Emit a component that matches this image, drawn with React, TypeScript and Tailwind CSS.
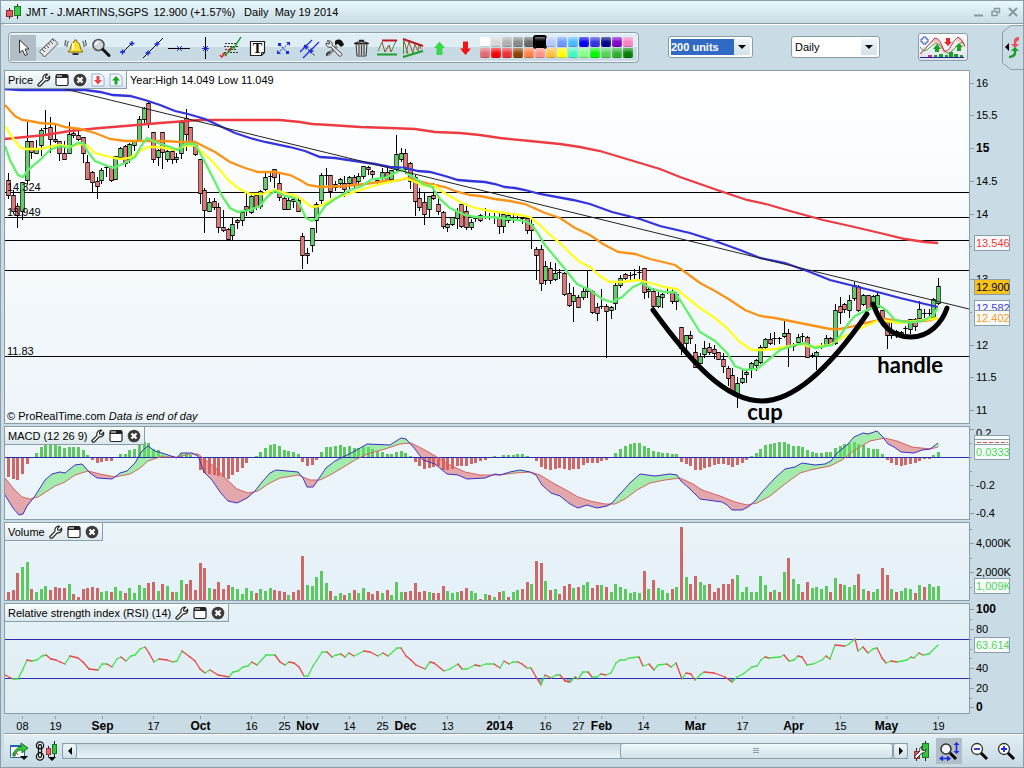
import * as React from "react";

const UP = "#5ed065";
const DOWN = "#e47575";
const FRAME = "#8b9ea8";

// centre of the n-th bar
const barX = (n: number) => Math.floor(8.5 + 4.673 * n);

// high, body top, body bottom, low, direction
type Candle = [number, number, number, number, number];

const candles: Candle[] = [
  [173, 180, 195, 198, 0], [190, 195, 211, 213, 0], [203, 206, 215, 227, 0], [182, 182, 211, 219, 1],
  [122, 141, 180, 183, 1], [141, 141, 152, 158, 0], [140, 149, 153, 153, 1], [128, 130, 145, 155, 1],
  [110, 128, 129, 133, 1], [117, 127, 139, 152, 0], [125, 139, 141, 142, 0], [141, 141, 153, 160, 0],
  [141, 153, 159, 159, 0], [122, 134, 153, 153, 1], [128, 133, 135, 137, 0], [129, 135, 139, 140, 0],
  [137, 137, 153, 162, 0], [155, 162, 179, 179, 0], [171, 172, 182, 191, 0], [177, 181, 186, 198, 0],
  [168, 170, 180, 183, 1], [165, 167, 168, 176, 1], [166, 167, 180, 181, 0], [156, 156, 179, 179, 1],
  [147, 148, 157, 158, 1], [145, 146, 163, 166, 0], [143, 144, 159, 162, 1], [140, 141, 145, 150, 1],
  [116, 119, 141, 141, 1], [107, 108, 119, 124, 1], [102, 103, 124, 127, 0], [132, 132, 159, 162, 0],
  [149, 150, 157, 165, 1], [132, 132, 152, 168, 0], [150, 151, 159, 161, 1], [147, 151, 159, 163, 0],
  [153, 157, 159, 162, 1], [120, 122, 153, 158, 1], [109, 118, 134, 150, 0], [127, 127, 143, 145, 0],
  [143, 145, 154, 155, 0], [159, 159, 193, 203, 0], [188, 190, 210, 232, 0], [198, 202, 211, 211, 1],
  [198, 201, 207, 209, 0], [203, 207, 227, 232, 0], [210, 227, 230, 231, 0], [228, 229, 239, 240, 0],
  [217, 224, 235, 240, 1], [219, 220, 222, 228, 0], [210, 212, 220, 225, 1], [193, 206, 209, 215, 0],
  [195, 196, 212, 213, 1], [193, 195, 207, 209, 0], [190, 191, 206, 208, 1], [173, 177, 189, 190, 1],
  [172, 176, 177, 181, 1], [169, 169, 177, 187, 0], [173, 183, 197, 200, 0], [197, 198, 209, 209, 0],
  [197, 200, 209, 209, 1], [198, 199, 201, 207, 1], [197, 200, 211, 211, 0], [233, 236, 255, 268, 0],
  [248, 253, 255, 263, 0], [228, 228, 245, 251, 1], [202, 204, 220, 232, 1], [173, 175, 200, 203, 1],
  [168, 175, 176, 184, 1], [175, 175, 191, 197, 0], [181, 184, 187, 190, 0], [178, 179, 183, 187, 1],
  [176, 183, 189, 196, 0], [176, 177, 183, 188, 1], [175, 177, 185, 187, 0], [173, 176, 181, 183, 1],
  [166, 166, 176, 178, 1], [166, 167, 169, 174, 0], [170, 171, 174, 177, 0], [178, 180, 182, 185, 1],
  [168, 172, 177, 179, 1], [168, 172, 180, 182, 0], [170, 170, 179, 182, 1], [135, 154, 169, 170, 1],
  [148, 153, 159, 161, 1], [149, 153, 169, 173, 0], [162, 163, 181, 188, 0], [175, 177, 201, 215, 0],
  [188, 198, 207, 210, 0], [193, 202, 214, 224, 0], [196, 196, 209, 217, 1], [183, 195, 198, 199, 0],
  [198, 204, 211, 214, 0], [211, 212, 226, 228, 0], [223, 224, 227, 231, 1], [217, 217, 224, 225, 1],
  [208, 211, 218, 228, 1], [204, 204, 226, 227, 0], [206, 211, 227, 229, 0], [219, 222, 227, 229, 1],
  [216, 218, 219, 221, 1], [214, 215, 220, 221, 0], [208, 217, 217, 218, 1], [213, 217, 217, 219, 1],
  [213, 217, 218, 223, 0], [211, 217, 226, 233, 0], [212, 214, 226, 232, 1], [214, 215, 220, 222, 1],
  [215, 217, 218, 222, 1], [214, 217, 218, 219, 1], [217, 218, 219, 223, 1], [218, 218, 230, 233, 0],
  [217, 224, 230, 248, 0], [247, 249, 255, 279, 0], [245, 249, 283, 290, 0], [261, 266, 280, 284, 1],
  [262, 268, 280, 283, 0], [263, 273, 279, 280, 1], [269, 272, 273, 278, 1], [272, 273, 294, 295, 0],
  [283, 293, 305, 306, 0], [287, 295, 301, 321, 1], [295, 297, 307, 307, 0], [287, 291, 297, 299, 1],
  [271, 289, 291, 297, 1], [290, 291, 312, 313, 0], [303, 307, 313, 320, 0], [289, 306, 307, 308, 1],
  [304, 306, 311, 357, 0], [306, 307, 310, 318, 1], [282, 285, 303, 309, 1], [275, 278, 285, 287, 1],
  [273, 274, 278, 279, 0], [272, 275, 276, 279, 1], [269, 274, 275, 278, 1], [266, 272, 273, 280, 1],
  [268, 268, 292, 298, 0], [287, 289, 291, 297, 1], [288, 291, 306, 307, 0], [292, 296, 306, 307, 1],
  [293, 294, 297, 307, 1], [288, 292, 292, 293, 1], [289, 291, 301, 303, 0], [292, 294, 301, 309, 1],
  [327, 327, 348, 354, 0], [335, 335, 343, 353, 1], [331, 335, 338, 343, 0], [344, 352, 367, 367, 0],
  [353, 356, 363, 363, 1], [341, 348, 354, 357, 1], [343, 347, 352, 354, 0], [345, 349, 353, 358, 0],
  [352, 352, 359, 359, 0], [353, 359, 366, 372, 0], [366, 368, 378, 385, 0], [368, 375, 392, 393, 0],
  [377, 383, 393, 407, 1], [368, 378, 382, 383, 1], [371, 372, 374, 382, 1], [362, 363, 368, 377, 1],
  [359, 360, 365, 370, 1], [345, 347, 362, 363, 1], [338, 339, 347, 349, 1], [333, 339, 343, 344, 0],
  [332, 338, 339, 344, 1], [337, 338, 339, 343, 1], [319, 333, 336, 337, 1], [329, 333, 347, 366, 0],
  [343, 346, 347, 350, 1], [334, 337, 342, 343, 1], [333, 336, 337, 341, 1], [336, 337, 357, 357, 0],
  [353, 355, 356, 357, 0], [351, 352, 356, 369, 1], [343, 346, 347, 348, 1], [335, 338, 344, 345, 1],
  [337, 338, 344, 345, 0], [304, 310, 343, 344, 1], [297, 306, 312, 323, 0], [303, 304, 309, 312, 0],
  [295, 300, 310, 317, 1], [282, 285, 298, 300, 1], [285, 286, 310, 311, 0], [294, 295, 304, 305, 1],
  [295, 295, 309, 310, 0], [295, 296, 304, 308, 1], [293, 295, 307, 309, 1], [310, 310, 321, 323, 0],
  [320, 321, 335, 348, 0], [322, 330, 335, 338, 1], [330, 331, 334, 337, 0], [331, 332, 335, 336, 1],
  [326, 328, 329, 333, 1], [319, 319, 329, 333, 1], [318, 319, 326, 330, 0], [301, 309, 318, 319, 1],
  [309, 313, 314, 317, 1], [309, 313, 314, 317, 1], [298, 299, 317, 317, 1], [278, 286, 303, 304, 1],
];

const averages = [
  {
    color: "#ee3a41",
    points:
      "5,139 25,137 45,135 70,131 100,128 125,126 160,123 200,120 225,120 250,120 280,120 300,122 312,124 330,125 360,127 390,128 415,129 435,132 460,133 480,135 500,138 530,141 560,144 580,147 600,151 620,157 640,163 660,169 680,177 700,184 720,191 747,200 766,204 790,211 823,220 850,226 880,233 905,239 925,242 938,243",
  },
  {
    color: "#fb9317",
    points:
      "5,105 15,116 22,120 30,121 40,123 55,124 65,127 80,129 95,133 110,139 125,141 145,141 165,141 180,142 195,142 205,147 215,152 230,162 245,168 258,172 275,172 290,175 300,180 308,185 320,187 345,186 365,184 385,181 395,181 408,178 415,180 430,184 445,187 455,191 470,195 480,196 495,199 510,201 525,204 545,213 560,218 575,228 590,235 603,244 618,252 635,254 650,259 663,262 675,265 685,272 700,283 715,291 730,300 745,310 760,316 775,318 800,323 815,326 830,329 840,329 850,327 865,323 885,319 900,321 915,322 930,320 938,318",
  },
  {
    color: "#3434dc",
    points:
      "5,89 20,90 57,90 85,90 100,92 113,95 130,96 145,100 160,105 175,111 188,114 205,119 220,126 235,133 250,138 265,142 290,147 305,151 320,157 335,158 355,161 375,164 390,167 405,168 418,171 430,172 445,176 458,180 470,181 485,182 495,184 505,187 515,188 525,190 540,194 573,200 590,204 612,212 640,219 660,226 690,233 715,241 740,250 760,258 785,263 810,272 830,280 850,285 870,290 900,298 925,304 938,307",
  },
  {
    color: "#ffff20",
    points:
      "5,126 12,137 20,147 25,149 40,149 48,147 60,145 70,147 80,144 88,146 95,153 110,157 120,159 130,158 140,151 148,147 160,147 175,150 185,146 195,145 200,150 210,159 220,170 228,180 238,188 250,194 262,194 275,190 285,193 297,196 305,202 312,207 320,206 333,199 345,195 360,190 380,184 395,181 405,178 413,181 425,186 435,186 443,192 460,202 475,208 490,211 505,213 520,215 530,217 540,225 550,235 560,243 570,253 580,262 590,267 600,276 610,282 622,282 638,280 650,283 665,287 677,289 685,296 700,308 715,318 727,328 740,342 752,350 762,350 775,349 785,347 800,344 812,347 830,345 847,335 863,327 880,320 900,323 915,321 938,318",
  },
  {
    color: "#62f06a",
    points:
      "5,146 10,160 18,175 23,177 28,170 40,160 50,150 60,146 68,148 78,143 83,143 88,152 95,161 105,165 113,168 125,163 135,157 142,145 147,138 155,142 170,147 178,150 185,144 195,144 200,153 208,168 215,182 222,196 230,208 238,212 250,210 260,206 268,196 275,191 285,196 295,198 300,205 306,218 312,221 317,218 325,206 335,199 350,190 362,186 372,179 385,178 397,172 402,169 408,174 415,178 423,184 432,187 440,199 450,208 465,215 475,217 490,217 510,219 525,221 532,225 537,232 545,245 555,257 565,269 577,284 590,290 602,299 612,302 622,297 633,287 642,283 652,289 665,292 675,292 680,300 690,316 700,332 715,341 727,353 735,366 745,370 757,369 767,361 780,350 795,345 805,343 815,348 832,345 840,336 848,324 855,316 865,311 873,307 880,306 887,311 895,320 905,322 915,322 925,320 933,315 938,308",
  },
];

const histogram = [
  -19, -21, -22, -16, -6, 0, 4, 10, 14, 14, 14, 11, 9, 10, 10, 10, 7, 2, -2, -5, -4, -3, -3, 0, 3, 3, 7, 8, 13, 15,
  14, 8, 7, 2, 1, 0, 0, 3, 4, 2, 0, -12, -15, -16, -17, -18, -19, -21, -17, -14, -10, -5, 0, 1, 5, 9, 12, 13, 11, 7,
  6, 5, 3, -4, -8, -7, -2, 5, 10, 10, 11, 12, 10, 11, 9, 9, 10, 10, 8, 6, 5, 3, 3, 5, 6, 4, 1, -4, -8, -11,
  -10, -9, -8, -12, -12, -11, -8, -8, -8, -6, -5, -3, -2, 0, 1, 0, 2, 2, 2, 3, 3, 1, 0, -3, -9, -11, -12, -11, -10,
  -11, -12, -11, -11, -7, -5, -5, -5, -3, -2, 0, 4, 8, 11, 13, 14, 14, 11, 9, 6, 5, 4, 4, 3, 3, -4, -6, -8, -12, -12,
  -10, -9, -7, -6, -6, -7, -9, -7, -5, -2, 1, 4, 8, 12, 13, 14, 15, 15, 13, 11, 11, 10, 7, 5, 4, 4, 5, 5, 9, 11, 13,
  14, 15, 13, 12, 9, 8, 8, 3, -2, -5, -7, -8, -7, -6, -5, -3, -1, -1, 2, 5,
];

const macdLine =
  "5,495 13,508 19,515 23,514 27,506 35,496 45,480 52,474 60,472 65,473 75,465 82,464 90,473 97,478 112,479 120,473 127,471 135,463 142,451 148,446 155,451 165,454 177,458 181,453 192,453 198,456 204,472 212,480 220,492 228,501 237,503 247,498 255,491 262,482 270,473 276,470 298,472 303,478 307,487 313,487 320,477 326,468 335,461 343,457 355,451 367,444 390,445 401,438 406,439 415,449 423,460 435,464 447,474 458,475 467,479 485,478 495,474 500,475 510,472 520,470 530,472 536,475 542,485 551,493 560,496 570,504 578,508 587,505 597,508 607,506 612,503 620,494 631,482 640,474 655,476 670,474 677,475 681,481 690,489 700,499 722,502 727,505 732,510 742,510 748,507 756,500 762,492 775,478 785,469 795,467 802,463 815,465 825,464 831,461 837,453 847,445 854,437 863,433 868,434 877,431 882,436 888,444 894,447 901,452 914,453 922,450 930,449 934,446 938,443";

const signalLine =
  "5,478 13,488 22,497 30,499 38,497 55,486 65,482 75,475 88,471 100,474 115,477 130,474 140,468 148,461 160,457 178,457 190,454 198,454 207,461 215,467 225,478 237,489 248,493 258,491 268,484 280,478 298,475 310,480 320,480 330,475 342,468 355,460 367,454 385,449 400,444 411,443 423,449 437,457 450,465 465,472 480,475 500,475 515,473 530,472 540,475 553,483 566,490 578,497 590,501 605,504 615,504 625,499 637,490 650,483 665,480 680,478 693,484 702,490 720,496 735,502 747,505 757,503 770,496 785,484 800,473 810,470 830,466 842,460 855,450 870,441 885,438 897,441 912,447 930,449 938,447";

// bar heights, negative on a falling day
const volume = [
  -8, -10, -27, 33, 38, -11, 8, 11, 14, -10, -13, -12, -12, 16, -6, -3, -11, -12, -13, -12, 8, 9, -8, 13, 9, -7, 12,
  7, 15, 12, -17, -18, 9, -16, 14, -8, 8, 20, -16, -20, -10, -37, -32, 12, -11, -18, -11, -15, 13, 11, 6, 12, 9, -7,
  11, 9, 12, -10, -9, -8, 5, -8, -10, -44, 15, 14, 23, 29, 17, -9, 4, 7, -5, 7, -10, 7, 12, -8, -6, -9, 7, -10, 5,
  18, 8, -8, -9, -17, -8, -9, 8, -7, -7, -14, 9, 7, 8, -9, -12, 9, 7, -1, 6, -5, 3, -8, 9, -3, 8, 10, -11, -18, 16,
  -39, -37, 19, -10, 11, -6, -14, -16, 12, -13, 15, 18, -12, -15, 15, -13, 8, 16, 13, 11, 7, 8, 7, -29, 11, -20, 12,
  10, 7, -11, 13, -73, 23, -16, -24, 18, 15, -16, -8, -12, -16, -16, -21, 25, 8, 13, 8, 8, 24, 15, -8, 10, -8, 28,
  -42, 21, 16, -8, -18, 12, 13, 11, 14, -8, 22, -16, 15, 13, 15, -26, 11, -9, 8, 11, -32, -25, 11, -8, 9, 12, 11, -7,
  15, -13, 16, 13, 14,
];

const rsiLine =
  "5,675 13,679 18,679 23,669 27,660 32,661 37,660 42,656 46,655 51,659 56,660 60,662 65,664 70,656 78,658 83,662 89,669 98,670 102,664 107,664 112,667 117,659 121,657 126,661 131,656 135,655 140,649 145,647 149,653 154,662 159,659 167,660 173,662 177,661 182,651 190,657 195,661 200,669 205,673 210,670 218,675 229,677 233,672 238,671 243,667 248,666 252,662 257,665 266,655 275,655 280,662 285,665 289,662 294,663 299,667 304,676 308,676 313,666 317,660 322,652 327,652 332,657 336,655 341,654 345,657 349,653 354,656 364,651 370,652 378,656 383,653 388,656 397,648 401,648 406,656 411,660 416,665 425,669 430,662 434,663 444,671 450,669 458,664 462,669 467,669 475,665 480,666 486,664 494,664 500,668 504,661 509,664 513,662 518,662 522,664 527,668 531,668 536,677 541,685 545,675 551,678 556,675 560,675 565,681 570,682 575,677 578,679 583,672 588,672 592,677 597,677 601,674 606,675 611,673 616,663 620,660 625,660 629,658 639,657 643,666 649,664 654,670 658,665 667,664 671,667 676,663 682,679 686,673 691,674 695,680 700,675 704,672 714,673 725,677 732,682 737,677 743,674 752,667 757,666 761,660 765,657 769,658 780,657 784,655 789,661 794,660 798,656 802,657 807,665 813,664 822,660 826,656 830,659 835,645 845,646 849,644 855,639 858,651 863,647 868,653 873,649 877,648 882,658 886,663 891,661 897,662 907,660 911,657 914,658 919,653 923,655 929,654 938,645";

const dates: [number, string][] = [
  [22, "08"], [55, "19"], [102, "Sep"], [153, "17"], [200, "Oct"], [251, "16"], [284, "25"], [307, "Nov"],
  [349, "14"], [382, "25"], [405, "Dec"], [447, "13"], [499, "2014"], [545, "16"], [578, "27"], [601, "Feb"],
  [643, "14"], [695, "Mar"], [742, "17"], [793, "Apr"], [840, "15"], [886, "May"], [938, "19"],
];

const palette = [
  "#ffffff", "#d6d6d6", "#b0b0b0", "#8a8a8a", "#686868", "#000000", "#b8c8ff", "#6c98ff", "#45bcff", "#0000f4",
  "#3333dd", "#00008c", "#8000c4", "#ff80c4", "#e06a70", "#f80000", "#e83238", "#8a4200", "#ff8046", "#ff9284",
  "#ffc040", "#ffff00", "#44f8c0", "#84ff84", "#00f800", "#54d454", "#30b030", "#008000",
];

const parse = (points: string) => points.split(" ").map((p) => p.split(",").map(Number));

const valueAt = (line: number[][], x: number) => {
  const n = Math.max(1, line.findIndex((p) => p[0] >= x));
  const [x0, y0] = line[n - 1];
  const [x1, y1] = line[n];
  return y0 + ((y1 - y0) * (x - x0)) / (x1 - x0);
};

// one column per pixel between the MACD line and its signal
const spread = (above: boolean) => {
  const macd = parse(macdLine);
  const signal = parse(signalLine);
  let d = "";
  for (let x = 5; x <= 938; x++) {
    const a = valueAt(macd, x);
    const b = valueAt(signal, x);
    if (a < b === above) d += `M${x + 0.5} ${a.toFixed(1)}V${b.toFixed(1)}`;
  }
  return d;
};

const Plot = ({ top, height, children }: { top: number; height: number; children: React.ReactNode }) => (
  <svg
    className="block h-full w-full"
    viewBox={`5 ${top} 964 ${height}`}
    preserveAspectRatio="none"
    aria-hidden="true"
  >
    {children}
  </svg>
);

const Wrench = () => (
  <svg width="14" height="14" viewBox="0 0 14 14" aria-hidden="true">
    <path
      d="M1 11.500 6 6.300C5.500 4 6.500 1.500 9.500 1l1 .3-2 2 .3 1.700 1.800.3 2-2c.7 2.700-1.500 5-4.300 4.500L3.300 13C2 13.600.5 12.800 1 11.500Z"
      fill="#fff"
      stroke="#222"
      strokeWidth="1.200"
    />
  </svg>
);

const WindowIcon = () => (
  <svg width="14" height="14" viewBox="0 0 14 14" aria-hidden="true">
    <rect x="1" y="1.500" width="12" height="11" rx="1.500" fill="#fff" stroke="#222" strokeWidth="1.200" />
    <path d="M1 2h12v3H1Z" fill="#222" />
    <path d="M2 2h5v2H2Z" fill="#999" />
  </svg>
);

const CloseIcon = () => (
  <svg width="14" height="14" viewBox="0 0 14 14" aria-hidden="true">
    <circle cx="7" cy="7" r="6.300" fill="#3c3c3c" />
    <path d="m4.500 4.500 5 5m0-5-5 5" stroke="#fff" strokeWidth="2.200" />
  </svg>
);

const PageArrow = ({ down }: { down?: boolean }) => (
  <svg width="14" height="14" viewBox="0 0 14 14" aria-hidden="true">
    <path d="M1 1h9l3 3v9H1Z" fill="#f6faff" stroke="#8fb0d8" />
    {down ? (
      <path d="M5.500 3h3v4H11l-4 4.500L3 7h2.500Z" fill="#f04444" />
    ) : (
      <path d="M5.500 11.500h3v-4H11L7 3 3 7.500h2.500Z" fill="#16a822" />
    )}
  </svg>
);

const PanelTab = ({ title, arrows }: { title: string; arrows?: boolean }) => (
  <div className="absolute left-0 top-0 flex h-[18px] items-center gap-1 border-r border-b border-[#8b9ea8] bg-linear-to-b from-[#f8fcfd] to-[#dce8ee] px-[3px]">
    <h2>{title}</h2>
    <button type="button" aria-label={`${title} settings`}><Wrench /></button>
    <button type="button" aria-label={`Detach ${title}`}><WindowIcon /></button>
    <button type="button" aria-label={`Close ${title}`}><CloseIcon /></button>
    {arrows && (
      <>
        <button type="button" aria-label="Move down"><PageArrow down /></button>
        <button type="button" aria-label="Move up"><PageArrow /></button>
      </>
    )}
  </div>
);

interface AxisProps {
  top: number;
  height: number;
  ticks: number[];
  labels: [number, string, boolean?][];
  children?: React.ReactNode;
}

const Axis = ({ top, height, ticks, labels, children }: AxisProps) => (
  <svg
    className="h-full w-[53px] shrink-0"
    viewBox={`970 ${top} 53 ${height}`}
    fontFamily="Liberation Sans, Arial, sans-serif"
    fontSize="11"
  >
    {ticks.map((y) => (
      <path key={y} d={`M970 ${y}.5h2`} stroke={FRAME} />
    ))}
    {labels.map(([y, text, bold]) => (
      <React.Fragment key={text}>
        <path d={`M970 ${y}.5h4`} stroke={FRAME} />
        <text x="976" y={y + 4} fontWeight={bold ? 700 : 400} fontSize={bold ? 12 : 11}>
          {text}
        </text>
      </React.Fragment>
    ))}
    {children}
  </svg>
);

const Badge = ({ y, text, color, fill }: { y: number; text: string; color: string; fill?: string }) => (
  <>
    <rect x="974.500" y={y + 0.5} width="35" height="15" fill={fill ?? "#f7fafb"} stroke={FRAME} />
    <text x="976" y={y + 12} fill={color}>{text}</text>
  </>
);

const PricePanel = () => (
  <section className="flex h-[354px]" aria-label="Price">
    <div className="relative flex-1 overflow-hidden border border-[#8b9ea8] bg-linear-to-b from-white to-[#eef5fa]">
      <Plot top={71} height={352}>
        {[192, 217, 240, 270, 356].map((y) => (
          <path key={y} d={`M5 ${y}.5H969`} stroke="#000" />
        ))}
        {candles.map(([high, top, bottom, low, up], n) => {
          const x = barX(n);
          const flat = bottom - top < 2;
          return (
            <g key={n}>
              <rect x={x} y={high} width="1" height={low - high + 1} />
              <rect x={x - 1.7} y={top} width="4.400" height={flat ? 1 : bottom - top + 1} />
              {!flat && (
                <rect x={x - 1} y={top + 1} width="3" height={bottom - top - 1} fill={up ? UP : DOWN} />
              )}
            </g>
          );
        })}
        {averages.map((line) => (
          <polyline key={line.color} points={line.points} fill="none" stroke={line.color} strokeWidth="2.300" />
        ))}
        <path d="M65 89 969 309" stroke="#222" />
        <g fill="none" stroke="#000" strokeWidth="5" strokeLinecap="round">
          <path d="M653 310C690 361 725 401 762 401C800 401 840 353 867 314" />
          <path d="M873 304C881 325 891 337 911 337C929 337 942 323 947 308" />
        </g>
      </Plot>
      <PanelTab title="Price" arrows />
      <p className="absolute left-[125px] top-[2px]">Year:High 14.049 Low 11.049</p>
      <span className="absolute left-[2px] top-[109px]">14.324</span>
      <span className="absolute left-[2px] top-[134px]">13.949</span>
      <span className="absolute left-[2px] top-[273px]">11.83</span>
      <p className="absolute left-[2px] bottom-0">
        © ProRealTime.com <i>Data is end of day</i>
      </p>
      <b className="absolute left-[77%] bottom-px font-[Lato] text-[22px] leading-5">cup</b>
      <b className="absolute right-[26px] top-[284px] font-[Lato] text-[22px] leading-5">handle</b>
    </div>
    <Axis
      top={70}
      height={354}
      ticks={[246, 312]}
      labels={[
        [83, "16"], [115, "15.5"], [148, "15", true], [181, "14.5"], [214, "14"], [279, "13"], [345, "12"],
        [377, "11.5"], [410, "11"],
      ]}
    >
      <Badge y={235} text="13.546" color="#f03a3a" />
      <Badge y={300} text="12.582" color="#4040e8" />
      <Badge y={310} text="12.402" color="#f79a20" />
      <Badge y={279} text="12.900" color="#000" fill="#f6c21c" />
    </Axis>
  </section>
);

const MacdPanel = () => (
  <section className="flex h-[94px]" aria-label="MACD">
    <div className="relative flex-1 overflow-hidden border border-[#8b9ea8] bg-linear-to-b from-[#eef6fa] to-[#e9f3fa]">
      <Plot top={427} height={92}>
        <g shapeRendering="crispEdges">
          {histogram.map((v, n) => (
            <rect
              key={n}
              x={barX(n) - 1}
              y={v > 0 ? 457 - v : 458}
              width="3"
              height={Math.abs(v)}
              fill={v > 0 ? "#5cc95f" : "#cf6767"}
            />
          ))}
        </g>
        <path d={spread(true)} stroke="#66e46c" strokeOpacity=".55" />
        <path d={spread(false)} stroke="#dc5c5c" strokeOpacity=".5" />
        <path d="M5 457.500H969" stroke="#2a2ab0" />
        <polyline points={signalLine} fill="none" stroke="#d86464" />
        <polyline points={macdLine} fill="none" stroke="#3a30cc" />
      </Plot>
      <PanelTab title="MACD (12 26 9)" />
    </div>
    <Axis
      top={426}
      height={94}
      ticks={[443, 457, 471, 499]}
      labels={[[429, ""], [485, "-0.2"], [513, "-0.4"]]}
    >
      <text x="976" y="437">0.2</text>
      <path d="M974.500 435.500h35v24h-35Z" fill="#f7fafb" stroke={FRAME} />
      <path d="M974.500 439.500h35M974.500 444.500h35" stroke={FRAME} />
      <path d="M977 442.500h31" stroke="#e05555" strokeDasharray="4 2" />
      <text x="976" y="456" fill="#4bd858">0.0333</text>
    </Axis>
  </section>
);

const VolumePanel = () => (
  <section className="flex h-[79px]" aria-label="Volume">
    <div className="relative flex-1 overflow-hidden border border-[#8b9ea8] bg-linear-to-b from-[#eaf4f9] to-[#e4f1f8]">
      <Plot top={523} height={77}>
        <g shapeRendering="crispEdges">
          {volume.map((v, n) => (
            <rect
              key={n}
              x={barX(n) - 1}
              y={600 - Math.abs(v)}
              width="3"
              height={Math.abs(v)}
              fill={v > 0 ? "#5cc95f" : "#cf6767"}
            />
          ))}
        </g>
      </Plot>
      <PanelTab title="Volume" />
    </div>
    <Axis top={522} height={79} ticks={[529, 558, 587]} labels={[[543, "4,000K"], [572, "2,000K"]]}>
      <Badge y={578} text="1,009K" color="#4bd858" />
    </Axis>
  </section>
);

const RsiPanel = () => {
  const points = parse(rsiLine);
  return (
    <section className="flex h-[111px]" aria-label="RSI">
      <div className="relative flex-1 overflow-hidden border border-[#8b9ea8] bg-linear-to-b from-[#e5f2f8] to-[#dfedf4]">
        <Plot top={604} height={109}>
          <path d="m537 679 4 6 3-6ZM565 679l5 4 4-4ZM729 679l3 4 4-4Z" fill="#8db4c0" />
          <path d="M5 639.500H969M5 678.500H969" stroke="#2a2ab0" />
          {points.slice(1).map(([x, y], n) => (
            <path
              key={x}
              d={`M${points[n][0]} ${points[n][1]}L${x} ${y}`}
              stroke={y <= points[n][1] ? "#45e04c" : "#e84545"}
              strokeWidth="1.300"
              strokeLinecap="round"
            />
          ))}
        </Plot>
        <PanelTab title="Relative strength index (RSI) (14)" />
      </div>
      <Axis
        top={603}
        height={111}
        ticks={[619, 639, 649, 658, 678, 698]}
        labels={[[609, "100", true], [629, "80"], [668, "40"], [688, "20"], [707, "0", true]]}
      >
        <Badge y={637} text="63.614" color="#4bd858" />
      </Axis>
    </section>
  );
};

const TimeAxis = () => (
  <div className="relative mr-[53px] h-[19px]">
    {dates.map(([x, text]) => (
      <div
        key={x}
        className="absolute top-[2px] flex -translate-x-1/2 flex-col items-center"
        style={{ left: `${((x - 3.5) / 966) * 100}%` }}
      >
        <span className="h-[3px] w-px bg-[#8b9ea8]" />
        <span className={/\D/.test(text) || text === "2014" ? "text-[12px] font-bold leading-[14px]" : "leading-[14px]"}>
          {text}
        </span>
      </div>
    ))}
  </div>
);

const Cross = ({ x, y }: { x: number; y: number }) => (
  <path d={`M${x - 2.5} ${y}h5M${x} ${y - 2.5}v5`} stroke="#1a2ae0" strokeWidth="1.400" />
);

const tools: [string, React.ReactNode][] = [
  ["Pointer", <path d="M8.500 4v13l3-3 2.500 5.500 2.500-1-2.500-5.500h4Z" fill="#fff" stroke="#333" />],
  [
    "Ruler",
    <>
      <path d="M2.500 15.500 16 2.500 21 7.500 7.500 21Z" fill="#e4e4e4" stroke="#555" />
      <path d="m5 13 3 3m-1-5 2 2m0-4 3 3m-1-5 2 2m0-4 3 3m-1-5 2 2" stroke="#555" />
    </>,
  ],
  [
    "Alert",
    <>
      <path d="M11.500 4h2l.5 2c3 1 3 4 3.500 7l2 2v1H5.500v-1l2-2C8 10 8 7 11 6Z" fill="#ffe030" stroke="#7a6a00" />
      <path d="M10 7v7" stroke="#fffbd0" strokeWidth="2" />
      <path d="M9.500 17h6v2h-6Z" fill="#333" />
      <path d="M5.500 5 4 8v3M3 4 2 7v3m17.500-5L21 8v3m1-7 1 3v3" fill="none" stroke="#444" />
    </>,
  ],
  [
    "Magnifier",
    <>
      <circle cx="9.500" cy="9" r="5.500" fill="#cfd8de" stroke="#555" strokeWidth="1.600" />
      <path d="M6.500 9a3 3 0 0 1 3-3" fill="none" stroke="#fff" strokeWidth="1.500" />
      <path d="m14 13.500 6 6" stroke="#111" strokeWidth="3" strokeLinecap="round" />
    </>,
  ],
  ["Segment", <><path d="m8 16 8-8" stroke="#000" /><Cross x={7.5} y={16} /><Cross x={17} y={7.5} /></>],
  ["Line", <><path d="M2 22 22 2" stroke="#000" /><Cross x={7} y={17} /><Cross x={16} y={8} /></>],
  ["Horizontal line", <><path d="M1 12.500h22" stroke="#000" /><path d="m10 10 5 5m0-5-5 5" stroke="#1a2ae0" /></>],
  ["Vertical line", <><path d="M12.500 1v22" stroke="#000" /><path d="m10 10 5 5m0-5-5 5M9 12.500h7" stroke="#1a2ae0" /></>],
  [
    "Fibonacci",
    <>
      <path d="M6 7.500h11M5 10.500h14M6 13.500h12M5 16.500h14" stroke="#333" strokeDasharray="2 1" />
      <path d="M1 19q2 4 3 0t3 1" fill="none" stroke="#e02020" strokeWidth="1.600" />
      <path d="M6 20 9 16l2-1 2-4 2 1 3-5 4-6" fill="none" stroke="#18a028" strokeWidth="1.400" />
      <path d="m9 15 4-4" stroke="#e02020" strokeWidth="1.400" />
    </>,
  ],
  [
    "Text",
    <>
      <path d="M5.500 5.500h14v11l-3 3h-11Z" fill="#fff" stroke="#222" strokeWidth="1.200" />
      <path d="M16.500 19.500v-3h3" fill="none" stroke="#222" />
      <text x="12.500" y="17" textAnchor="middle" fontFamily="Liberation Serif, serif" fontWeight="700" fontSize="14">T</text>
    </>,
  ],
  [
    "Channel",
    <>
      <path d="m7 17 10-9m-8 1 7 7" stroke="#1a2ae0" strokeDasharray="2 1" />
      <path d="M15 6h4v4ZM6 14v4h4ZM7 7h3v3H7Zm8 8h3v3h-3Z" fill="#1a2ae0" />
    </>,
  ],
  [
    "Parallel lines",
    <>
      <path d="M3 16 15 4m-9 18L22 6" stroke="#1a2ae0" strokeWidth="1.200" />
      <path d="m7 9 11 11" stroke="#000" strokeDasharray="2 1" />
      <Cross x={9} y={11} /><Cross x={14} y={15} />
    </>,
  ],
  [
    "Tools",
    <>
      <path d="m5 19 9-9" stroke="#888" strokeWidth="3" />
      <path d="M12 5c4-3 8-1 9 4l-3 2-3-3-3 1Z" fill="#111" />
      <path d="M4 5c3-1 6 1 5 4l9 8c2 2 0 4-2 3l-8-9c-3 1-5-1-5-4l3 1 1-1Z" fill="#e8e8e8" stroke="#444" />
      <path d="M4 20c-1-2 1-4 3-4" stroke="#222" fill="none" strokeWidth="1.500" />
    </>,
  ],
  [
    "Delete",
    <>
      <path d="M7 8h11l-1 12H8Z" fill="#ddd" stroke="#333" />
      <path d="M10 9v10m2.500-10v10M15 9v10" stroke="#444" strokeWidth="1.200" />
      <path d="M5 7.500q7.500-4 15 0Z" fill="#999" stroke="#222" />
      <path d="M10 4.500h5" stroke="#222" strokeWidth="1.500" />
    </>,
  ],
  [
    "Support and resistance",
    <>
      <path d="M3 15 7 6m9 10 5-11" fill="none" stroke="#28a038" />
      <path d="m7 6 3 10 4-7 2 7" fill="none" stroke="#d03030" />
      <path d="m10 16 4-7" stroke="#28a038" />
      <path d="M7 4.500h15" stroke="#c01820" strokeWidth="2" />
      <path d="M2 18.500h20" stroke="#18a028" strokeWidth="2" />
    </>,
  ],
  [
    "Triangle pattern",
    <>
      <path d="m3 5 4 13m1-12 4 11m1-10 4 8m1-7 2 5" fill="none" stroke="#d03030" />
      <path d="M2.500 3v15M5 17l3-11m4 11 2-10m3 8 1-7" stroke="#28a038" />
      <path d="m2 3 20 7" stroke="#c01820" strokeWidth="2" />
      <path d="m2 21 20-6" stroke="#18a028" strokeWidth="2" />
    </>,
  ],
  ["Up arrow", <path d="M9.500 19v-7H7l5.500-6.500L18 12h-2.500v7Z" fill="#36d94a" />],
  ["Down arrow", <path d="M10 5.500h5v7h3L12.500 19 7 12.500h3Z" fill="#f01414" />],
];

const ToolBox = () => (
  <div className="flex h-[31px] items-center rounded-[4px] border border-[#8b9ea8] bg-linear-to-b from-[#dfedf4] from-50% to-[#c8dae3] to-50% pl-px pr-[5px] shadow-[inset_0_0_0_1px_#f3f9fb]">
    {tools.map(([label, icon], n) => (
      <button
        key={label}
        type="button"
        aria-label={label}
        className={n === 0 ? "flex h-[26px] w-[26px] items-center justify-center bg-[#b1bec7]" : "flex h-[26px] w-[26px] items-center justify-center"}
      >
        <svg width="24" height="24" viewBox="0 0 24 24" aria-hidden="true">{icon}</svg>
      </button>
    ))}
    <div className="ml-[2px] grid grid-cols-14 gap-px">
      {palette.map((color, n) => (
        <button
          key={color}
          type="button"
          aria-label={`Colour ${color}`}
          className={
            n === 5
              ? "h-[10px] w-[10px] rounded-[1px] bg-linear-to-b from-[#777] to-black to-50% outline-2 outline-black"
              : "h-[10px] w-[10px] rounded-[2px] shadow-[inset_0_3px_3px_#ffffff66,inset_0_-1px_0_#00000033]"
          }
          style={n === 5 ? undefined : { backgroundColor: color }}
        />
      ))}
    </div>
  </div>
);

interface DropdownProps {
  label: string;
  options: string[];
  selected?: boolean;
}

const Dropdown = ({ label, options, selected }: DropdownProps) => (
  <div className="flex h-[22px] items-center rounded-[3px] border border-[#8b9ea8] bg-white p-[2px]">
    <select
      aria-label={label}
      className={
        selected
          ? "h-[16px] w-[63px] appearance-none bg-[#316ac5] font-bold text-white outline-none"
          : "h-[16px] w-[67px] appearance-none bg-white pl-px text-black outline-none"
      }
    >
      {options.map((o) => <option key={o}>{o}</option>)}
    </select>
    <span className="flex h-[16px] w-[16px] items-center justify-center bg-linear-to-b from-[#eef6f9] to-[#d3e1e8]">
      <svg width="8" height="4" viewBox="0 0 8 4" aria-hidden="true"><path d="M0 0h8L4 4Z" /></svg>
    </span>
  </div>
);

const TitleBar = () => (
  <header className="-ml-[3px] flex h-[23px] items-center border-b border-[#8b9ea8] bg-linear-to-b from-[#e9f8fc] to-[#c9dce5] pl-1 pr-[5px]">
    <svg width="16" height="16" viewBox="0 0 16 16" aria-hidden="true">
      <path d="M4.500 4v11M12.500 0v15" stroke="#222" />
      <rect x="1.500" y="6.500" width="6" height="6" fill="#e05a60" stroke="#8a2a2a" />
      <rect x="9.500" y="2.500" width="6" height="9" fill="#3ccc48" stroke="#1a7a24" />
    </svg>
    <h1 className="ml-[5px] whitespace-pre">JMT - J.MARTINS,SGPS</h1>
    <span className="ml-[5px] whitespace-pre">12.900 (+1.57%)</span>
    <span className="ml-[9px] whitespace-pre">Daily  May 19 2014</span>
    <div className="ml-auto flex items-center gap-[7px] text-[#8a979f]">
      <button type="button" aria-label="Minimise">
        <svg width="10" height="10" viewBox="0 0 10 10"><path d="M0 8.500h9" stroke="currentColor" strokeWidth="2" /></svg>
      </button>
      <button type="button" aria-label="Restore">
        <svg width="10" height="10" viewBox="0 0 10 10" fill="none" stroke="currentColor" strokeWidth="1.400">
          <path d="M3.500 3.500v-2h5v4H7M1 4.500h5v4H1Z" />
        </svg>
      </button>
      <button type="button" aria-label="Close">
        <svg width="10" height="10" viewBox="0 0 10 10"><path d="m1 1 8 8m0-8L1 9" stroke="currentColor" strokeWidth="2" /></svg>
      </button>
    </div>
  </header>
);

const TopBar = () => (
  <div className="flex h-[46px] items-start border-t border-white pl-1">
    <div className="pt-[7px]"><ToolBox /></div>
    <div className="ml-[29px] pt-[11px]"><Dropdown label="Units" options={["200 units", "500 units"]} selected /></div>
    <div className="ml-[38px] pt-[11px]"><Dropdown label="Period" options={["Daily", "Weekly"]} /></div>
    <button
      type="button"
      aria-label="Indicators and trading systems"
      className="ml-auto mt-[8px] mr-[33px] h-[28px] w-[50px] rounded-[3px] border border-[#8b9ea8] bg-linear-to-b from-white to-[#dfe3ea] p-px"
    >
      <svg className="block" width="46" height="24" viewBox="0 0 46 24" aria-hidden="true">
        <path d="M0 19 15 3q4 0 6 6l4 8 4-1q5-3 9-14 3 0 5 4l2 4v4q-4-6-7-8-4 3-6 9-3 5-8 3-5-5-9-11Q8 8 2 20Z" fill="#f6c6c6" />
        <path d="M0 12q4 6 8 2t8-6q4 1 8 7t8 1 10-9l3 3" fill="none" stroke="#40a848" />
        <path d="M0 19 15 3q5 0 9 13 4 1 7-5t7-9q4 2 7 9" fill="none" stroke="#b83848" />
        <path d="M15 17v-3h-2l4-5 4 5h-2v3ZM37 16v-4h-2l4-4 4 4h-2v4Z" fill="#18a028" />
        <path d="M26 3h4v4h2l-4 4-4-4h2Z" fill="#e82828" />
        <path d="M3 2h3v2h2v3H6v2H3V7H1V4h2Z" fill="#fff" stroke="#2858c0" />
        <path d="M8 20h4v2H8Z" fill="#c83080" />
        <path d="M14 20h3v2h-3Zm5-1h4v3h-4Zm6 1h3v2h-3Zm4-3h4v5h-4Zm5 2h4v3h-4Zm6 1h3v2h-3Z" fill="#18a028" />
        <path d="M0 22.500h44" stroke="#2020a0" />
      </svg>
    </button>
    <button type="button" aria-label="Open side panel">
      <svg className="block" width="22" height="46" viewBox="0 0 22 46" aria-hidden="true">
        <path d="M22 .5h-12L1.500 7v31l8.500 6.500H22" fill="none" stroke={FRAME} />
        <path d="M8 18v8l-4-4Z" />
        <path d="M18 12c-4 0-6 3-5 7h-3l4 4 4-4h-3c0-2 1-3 3-4Z" fill="#ec5058" />
        <path d="M8 33c5 0 8-2 7-7h3l-4-4-4 4h3c0 3-1 4-5 5Z" fill="#18a028" />
      </svg>
    </button>
  </div>
);

const BottomBar = () => (
  <footer className="flex h-[34px] items-center border-t border-[#8b9ea8] bg-linear-to-b from-[#e2eff5] to-[#c6d9e2] pl-[6px] pr-[7px] shadow-[inset_0_1px_0_#fff]">
    <button type="button" aria-label="Export chart">
      <svg width="18" height="18" viewBox="0 0 18 18" aria-hidden="true">
        <path d="M.5 3.500h14v12H.5Z" fill="#fff" stroke="#2868b0" />
        <path d="M.5 4h14" stroke="#2060b0" strokeWidth="2" />
        <path d="m2 13 3-4 3 4" fill="none" stroke="#c04040" />
        <path d="M3 14C4 8 8 5 11 5V1l7 5-6 5V8C8 8 6 10 5 14Z" fill="#34c440" stroke="#187820" />
        <path d="M10 14h8l-4 4Z" />
      </svg>
    </button>
    <button type="button" aria-label="Link charts" className="ml-[7px]">
      <svg width="24" height="20" viewBox="0 0 24 20" aria-hidden="true">
        <g fill="#fff" stroke="#111" strokeWidth="1.300">
          <circle cx="5" cy="4.500" r="3.600" /><circle cx="5" cy="15.500" r="3.600" />
          <rect x="3.500" y="3.500" width="3" height="5" rx="1.500" />
          <rect x="3.500" y="7.500" width="3" height="5" rx="1.500" />
          <rect x="3.500" y="11.500" width="3" height="5" rx="1.500" />
        </g>
        <path d="M13.500 5v11M19.500 0v16" stroke="#222" />
        <rect x="11.500" y="7.500" width="4" height="6" fill="#e86a70" stroke="#a03030" />
        <rect x="17.500" y="3.500" width="4" height="9" fill="#34c440" stroke="#187820" />
        <path d="M13 16h8l-4 4Z" />
      </svg>
    </button>
    <div className="ml-[3px] flex h-[16px] flex-1 border-y border-[#8b9ea8] bg-linear-to-b from-[#c9dbe2] to-[#e9f4f8]">
      <button
        type="button"
        aria-label="Scroll left"
        className="-my-px flex w-[15px] items-center justify-center rounded-[3px] border border-[#8b9ea8] bg-linear-to-b from-[#f0f9fb] to-[#cfdfe6]"
      >
        <svg width="4" height="8" viewBox="0 0 4 8" aria-hidden="true"><path d="M4 0v8L0 4Z" /></svg>
      </button>
      <span className="flex-2" />
      <button
        type="button"
        aria-label="Visible range"
        className="-my-px flex flex-1 items-center justify-center rounded-[3px] border border-[#8b9ea8] bg-linear-to-b from-[#eefafc] to-[#d2e2e9]"
      >
        <span className="h-[5px] w-[6px] border-y border-[#8b9ea8] bg-[linear-gradient(#8b9ea8,#8b9ea8)] bg-size-[6px_1px] bg-center bg-no-repeat" />
      </button>
      <button
        type="button"
        aria-label="Scroll right"
        className="-my-px flex w-[15px] items-center justify-center rounded-[3px] border border-[#8b9ea8] bg-linear-to-b from-[#f0f9fb] to-[#cfdfe6]"
      >
        <svg width="4" height="8" viewBox="0 0 4 8" aria-hidden="true"><path d="M0 0v8L4 4Z" /></svg>
      </button>
    </div>
    <button type="button" aria-label="Chart settings" className="ml-[5px]">
      <svg width="18" height="20" viewBox="0 0 18 20" aria-hidden="true">
        <path d="M3.500 7v13M12.500 0v20" stroke="#222" />
        <rect x="1.500" y="10.500" width="5" height="7" fill="#e05a60" stroke="#a03030" />
        <rect x="9.500" y="2.500" width="6" height="14" fill="#34c440" stroke="#187820" />
        <path d="m2 15 5-5C6 8 7 6 9 5.500L8.500 8l1 1.500h2L13 8c0 3-2 4-4 4l-5 5c-1 1-3-1-2-2Z" fill="#fff" stroke="#333" />
      </svg>
    </button>
    <button type="button" aria-label="Auto fit" className="ml-[5px] flex h-[26px] w-[26px] items-center justify-center bg-[#b1bec7]">
      <svg width="22" height="22" viewBox="0 0 22 22" aria-hidden="true">
        <circle cx="8" cy="9" r="5" fill="#f4f8fa" stroke="#333" strokeWidth="1.500" />
        <path d="m12 13 6 6" stroke="#000" strokeWidth="3" />
        <path d="M18.500 4v8M4 18.500h7" stroke="#1a2ae0" strokeWidth="1.600" />
        <path d="m15.500 5 3-3 3 3Zm0 6 3 3 3-3ZM5 15.500l-4 3 4 3Zm4 0 4 3-4 3Z" fill="#1a2ae0" />
      </svg>
    </button>
    {["Zoom out", "Zoom in"].map((label) => (
      <button key={label} type="button" aria-label={label} className="ml-[7px]">
        <svg width="20" height="20" viewBox="0 0 20 20" aria-hidden="true">
          <circle cx="8" cy="8" r="5.500" fill="#fff" stroke="#333" strokeWidth="1.300" />
          <path d="m12 12 6 6" stroke="#000" strokeWidth="3" />
          <path d={label === "Zoom in" ? "M5 8h6M8 5v6" : "M5 8h6"} stroke="#1a2ae0" strokeWidth="1.800" />
        </svg>
      </button>
    ))}
  </footer>
);

export default () => (
  <div
    className="min-h-screen border border-[#8b9ea8] bg-[#c9dbe4] pl-[3px] text-[11px] leading-[14px] text-black"
    style={{ fontFamily: "'Liberation Sans', Arial, sans-serif" }}
  >
    <TitleBar />
    <TopBar />
    <main className="flex flex-col gap-[2px]">
      <PricePanel />
      <MacdPanel />
      <VolumePanel />
      <RsiPanel />
    </main>
    <TimeAxis />
    <BottomBar />
  </div>
);
